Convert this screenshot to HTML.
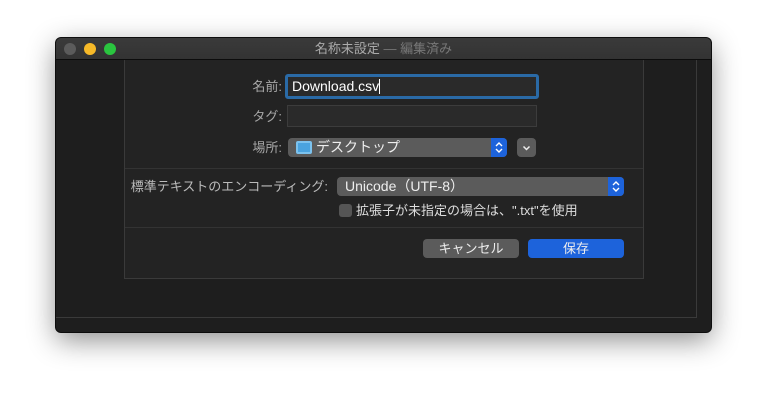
<!DOCTYPE html>
<html><head><meta charset="utf-8"><style>
*{margin:0;padding:0;box-sizing:border-box}
body{width:767px;height:406px;background:#fff;position:relative;overflow:hidden;font-family:"Liberation Sans","Noto Sans CJK JP",sans-serif;font-size:13px;color:#ddd}
.abs{position:absolute}
.win{left:56px;top:38px;width:655px;height:294px;background:#1e1e1e;border-radius:5px;box-shadow:0 8px 28px rgba(0,0,0,.45),0 0 0 1px #111;overflow:hidden}
.title{left:0;top:0;width:655px;height:22px;background:linear-gradient(#3a3a3a,#333);border-bottom:1px solid #0c0c0c;text-align:center;font-size:13px;line-height:22px;color:#aaa}
.title span{color:#777}
.dot{width:12px;height:12px;border-radius:50%;top:5px}
.sheet{left:68px;top:22px;width:520px;height:219px;background:#232323;border:1px solid #3a3a3a;border-top:none}
.lbl{color:#a8a8a8;text-align:right;line-height:16px}
.field{background:#2a2a2a;border:1px solid #3c3c3c}
.pop{background:#5b5b5b;border-radius:4px;color:#eee}
.blue{background:#1d63db}
.btn{border-radius:4px;text-align:center;line-height:19px;color:#eee;font-size:13px}
</style></head><body>
<div class="abs win">
  <div class="abs title">名称未設定 <span>— 編集済み</span></div>
  <div class="abs dot" style="left:8px;background:#5b5b5b"></div>
  <div class="abs dot" style="left:28px;background:#f6b928"></div>
  <div class="abs dot" style="left:48px;background:#2ac53f"></div>
  <div class="abs" style="left:640px;top:22px;width:1px;height:258px;background:#3a3a3a"></div>
  <div class="abs" style="left:0;top:279px;width:641px;height:1px;background:#3a3a3a"></div>
  <div class="abs sheet"></div>
</div>
<div class="abs lbl" style="left:220px;top:79px;width:62px">名前:</div>
<div class="abs" style="left:285px;top:74px;width:254px;height:25px;border:3px solid #2a6aa6;border-radius:3px;background:#2a2a2a;color:#fff;padding-left:4px;line-height:19px;font-size:14px">Download.csv<span style="display:inline-block;width:1px;height:15px;background:#fff;vertical-align:-3px"></span></div>
<div class="abs lbl" style="left:220px;top:109px;width:62px">タグ:</div>
<div class="abs field" style="left:287px;top:105px;width:250px;height:22px"></div>
<div class="abs lbl" style="left:220px;top:140px;width:62px">場所:</div>
<div class="abs pop" style="left:288px;top:138px;width:219px;height:19px"></div>
<div class="abs" style="left:296px;top:141px;width:16px;height:13px;background:#4aa3df;border-radius:2px;border:2px solid #7cc2ee"></div>
<div class="abs" style="left:316px;top:137px;color:#eee;font-size:14px">デスクトップ</div>
<div class="abs blue" style="left:491px;top:138px;width:16px;height:19px;border-radius:0 4px 4px 0"><svg width="16" height="19"><path d="M5 8 L8 5 L11 8 M5 11 L8 14 L11 11" stroke="#fff" stroke-width="1.4" fill="none"/></svg></div>
<div class="abs pop" style="left:517px;top:138px;width:19px;height:19px"><svg width="19" height="19"><path d="M6.5 8.5 L9.5 11.5 L12.5 8.5" stroke="#eee" stroke-width="1.5" fill="none"/></svg></div>
<div class="abs" style="left:125px;top:168px;width:518px;height:1px;background:#333"></div>
<div class="abs lbl" style="left:130px;top:179px;width:198px;color:#bbb">標準テキストのエンコーディング:</div>
<div class="abs pop" style="left:337px;top:177px;width:287px;height:19px;padding-left:8px;line-height:19px;font-size:14px">Unicode（UTF-8）</div>
<div class="abs blue" style="left:608px;top:177px;width:16px;height:19px;border-radius:0 4px 4px 0"><svg width="16" height="19"><path d="M5 8 L8 5 L11 8 M5 11 L8 14 L11 11" stroke="#fff" stroke-width="1.4" fill="none"/></svg></div>
<div class="abs" style="left:339px;top:204px;width:13px;height:13px;background:#555;border-radius:3px"></div>
<div class="abs" style="left:356px;top:203px;color:#ddd;line-height:16px">拡張子が未指定の場合は、".txt"を使用</div>
<div class="abs" style="left:125px;top:227px;width:518px;height:1px;background:#333"></div>
<div class="abs btn" style="left:423px;top:239px;width:96px;height:19px;background:#5b5b5b">キャンセル</div>
<div class="abs btn" style="left:528px;top:239px;width:96px;height:19px;background:#1d63db">保存</div>
</body></html>
